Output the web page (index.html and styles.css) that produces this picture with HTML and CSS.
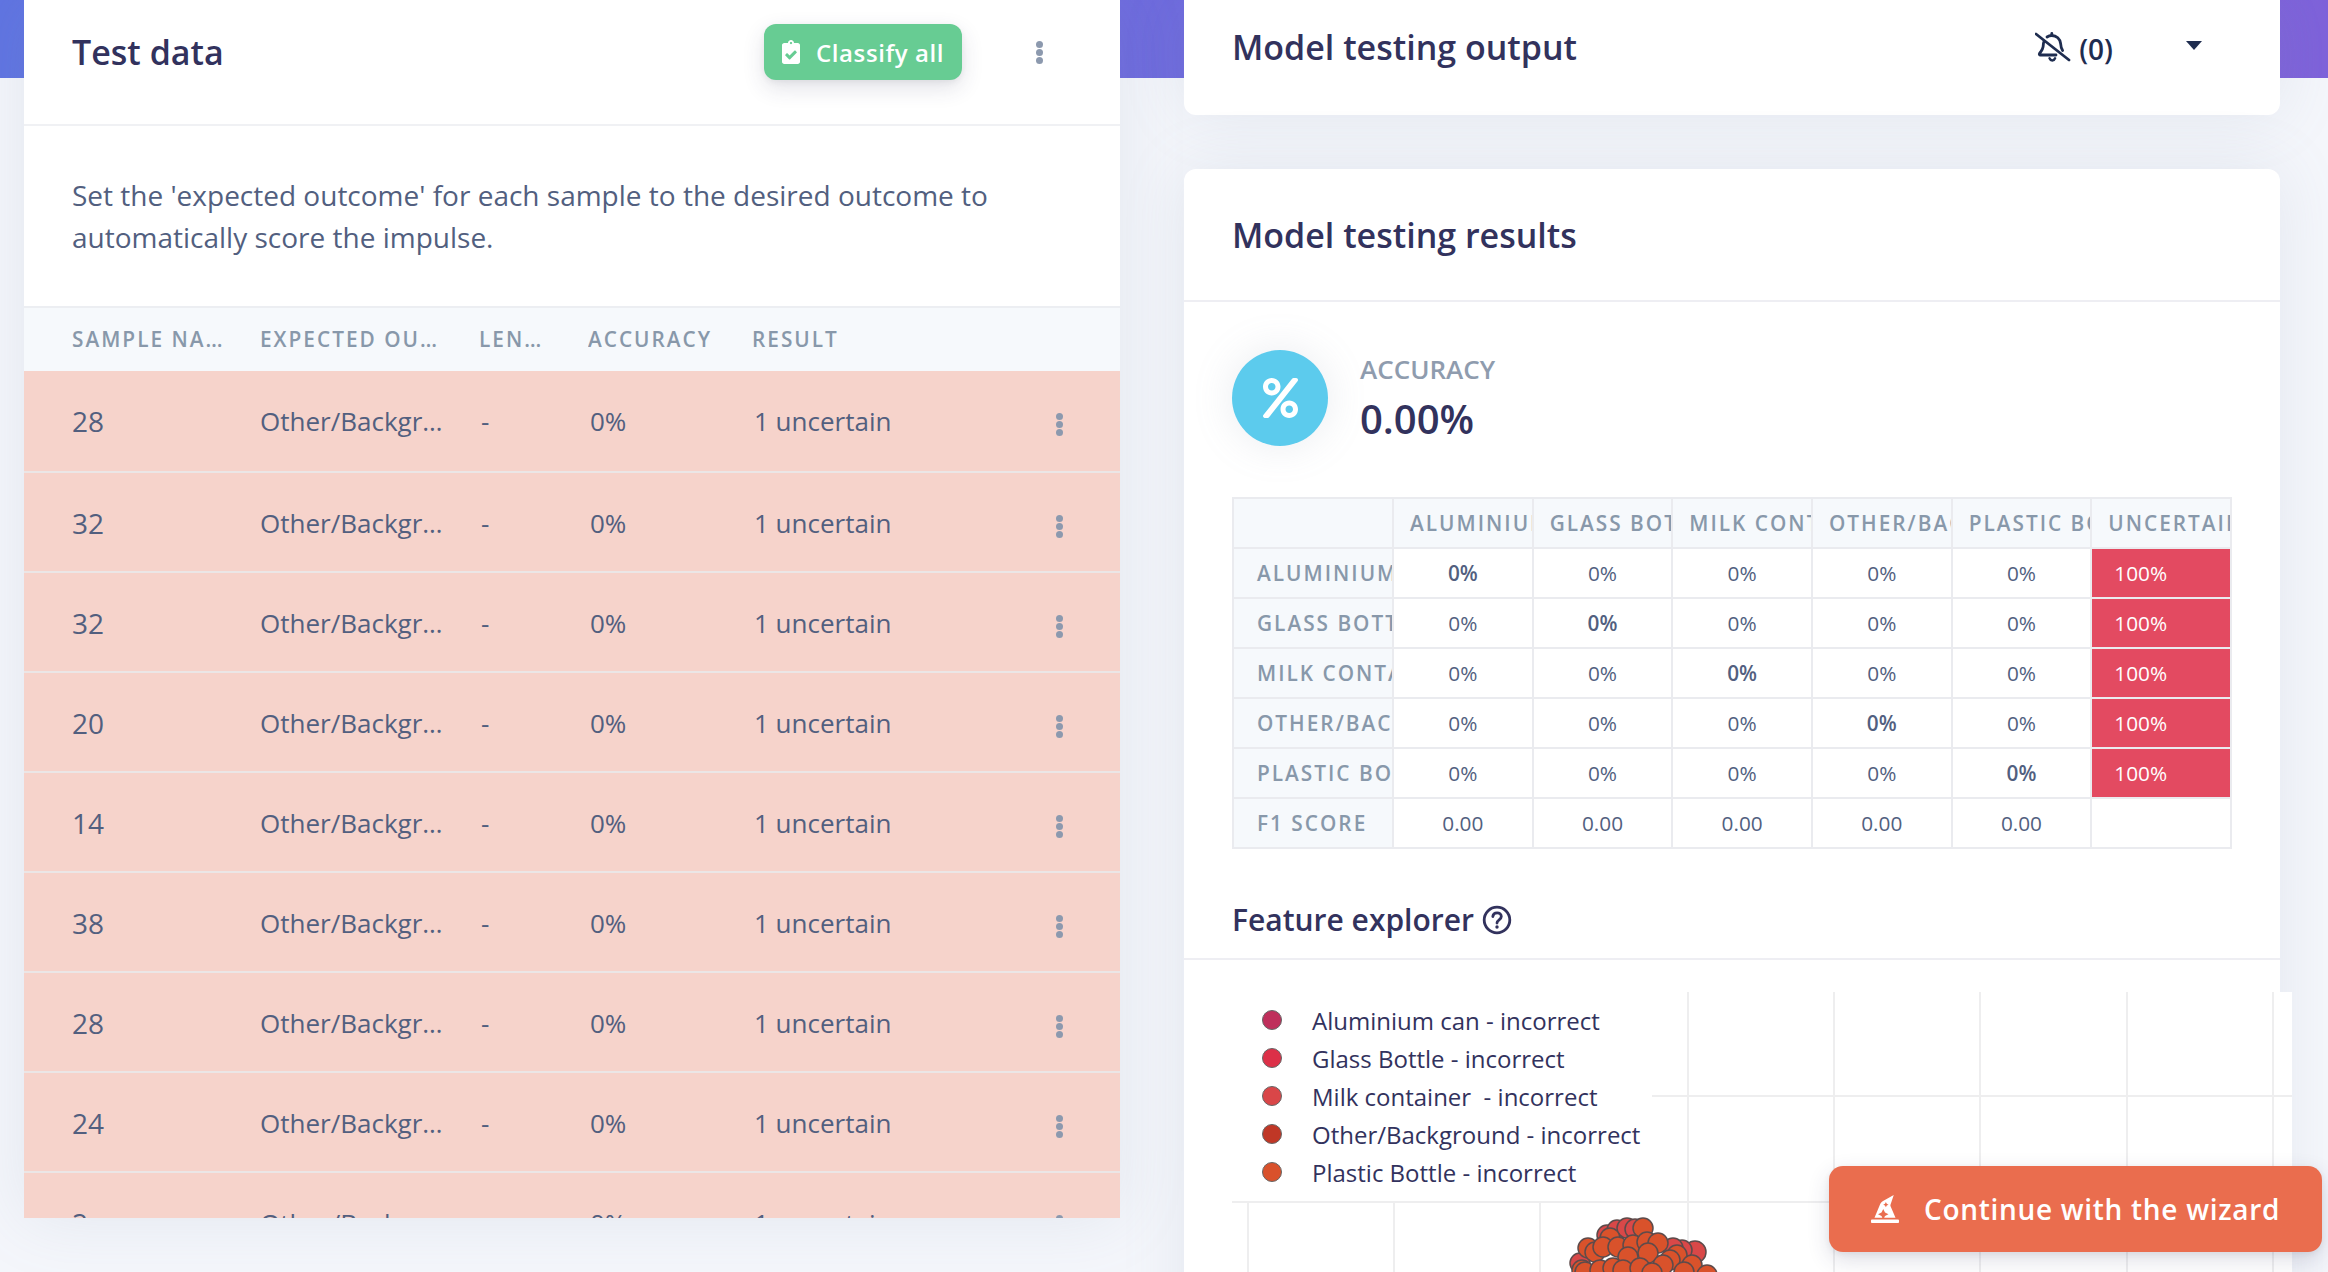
FILE: index.html
```html
<!DOCTYPE html>
<html lang="en">
<head>
<meta charset="utf-8">
<title>Model testing</title>
<link rel="stylesheet" href="styles.css">
</head>
<body>
<div class="band"></div>
<main class="page">
  <section class="card test-card">
    <header class="test-head">
      <h3 class="title">Test data</h3>
      <button class="btn-classify">
        <svg class="ico-clip" viewBox="0 0 384 512"><path fill="#fff" d="M336 64h-80c0-35.3-28.7-64-64-64s-64 28.7-64 64H48C21.5 64 0 85.5 0 112v352c0 26.5 21.5 48 48 48h288c26.5 0 48-21.5 48-48V112c0-26.5-21.5-48-48-48zM192 40c13.3 0 24 10.7 24 24s-10.7 24-24 24-24-10.7-24-24 10.7-24 24-24zm121.2 231.8l-143 141.8c-4.7 4.7-12.3 4.6-17-.1l-82.6-83.3c-4.7-4.7-4.6-12.3.1-17L99.1 285c4.7-4.7 12.3-4.6 17 .1l46 46.4 106-105.2c4.7-4.7 12.3-4.6 17 .1l28.2 28.4c4.7 4.8 4.6 12.3-.1 17z"/></svg>
        Classify all
      </button>
      <span class="dots head-dots"><i></i><i></i><i></i></span>
    </header>
    <p class="desc">Set the 'expected outcome' for each sample to the desired outcome to automatically score the impulse.</p>
    <div class="grid-row th-row">
      <span class="c">Sample name</span><span class="c">Expected outcome</span><span class="c">Length</span><span class="c">Accuracy</span><span class="c">Result</span>
    </div>
    <div class="grid-row tr first"><span class="c">28</span><span class="c">Other/Background</span><span class="c">-</span><span class="c">0%</span><span class="c">1 uncertain</span><span class="dots"><i></i><i></i><i></i></span></div>
    <div class="grid-row tr"><span class="c">32</span><span class="c">Other/Background</span><span class="c">-</span><span class="c">0%</span><span class="c">1 uncertain</span><span class="dots"><i></i><i></i><i></i></span></div>
    <div class="grid-row tr"><span class="c">32</span><span class="c">Other/Background</span><span class="c">-</span><span class="c">0%</span><span class="c">1 uncertain</span><span class="dots"><i></i><i></i><i></i></span></div>
    <div class="grid-row tr"><span class="c">20</span><span class="c">Other/Background</span><span class="c">-</span><span class="c">0%</span><span class="c">1 uncertain</span><span class="dots"><i></i><i></i><i></i></span></div>
    <div class="grid-row tr"><span class="c">14</span><span class="c">Other/Background</span><span class="c">-</span><span class="c">0%</span><span class="c">1 uncertain</span><span class="dots"><i></i><i></i><i></i></span></div>
    <div class="grid-row tr"><span class="c">38</span><span class="c">Other/Background</span><span class="c">-</span><span class="c">0%</span><span class="c">1 uncertain</span><span class="dots"><i></i><i></i><i></i></span></div>
    <div class="grid-row tr"><span class="c">28</span><span class="c">Other/Background</span><span class="c">-</span><span class="c">0%</span><span class="c">1 uncertain</span><span class="dots"><i></i><i></i><i></i></span></div>
    <div class="grid-row tr"><span class="c">24</span><span class="c">Other/Background</span><span class="c">-</span><span class="c">0%</span><span class="c">1 uncertain</span><span class="dots"><i></i><i></i><i></i></span></div>
    <div class="grid-row tr"><span class="c">2</span><span class="c">Other/Background</span><span class="c">-</span><span class="c">0%</span><span class="c">1 uncertain</span><span class="dots"><i></i><i></i><i></i></span></div>
  </section>

  <div class="right">
    <section class="card output-card">
      <h3 class="title">Model testing output</h3>
      <span class="bell">
        <svg class="ico-bell" viewBox="0 0 36 30" fill="none" stroke="#1f2d50" stroke-width="2.8" stroke-linecap="round" stroke-linejoin="round">
          <path d="M1 2l33 26"/>
          <path d="M9 9.500c-.5 1.200-.7 2.400-.7 3.500 0 3.500-1.300 5.500-3.800 8.500-.5.7 0 1.500.8 1.500H21"/>
          <path d="M12 5c1.300-.9 3-1.500 4.800-1.500 4.700 0 8.300 3.500 8.800 8 .2 3 .8 5 2 7"/>
          <path d="M16.800 1.500v2"/>
          <path d="M14.500 26.300c.6 1.500 1.700 2.200 2.800 2.200s2.200-.7 2.800-2.200" stroke-width="2.400"/>
        </svg>
        <span class="bell-count">(0)</span>
      </span>
      <svg class="ico-caret" viewBox="0 0 16 9"><path fill="#1f2d50" d="M0 0h16L8 9z"/></svg>
    </section>

    <section class="card results-card">
      <header class="results-head"><h3 class="title">Model testing results</h3></header>
      <div class="stat">
        <div class="stat-circle">
          <svg class="ico-pct" viewBox="0 0 448 512"><path fill="#fff" d="M112 224c61.900 0 112-50.100 112-112S173.900 0 112 0 0 50.100 0 112s50.100 112 112 112zm0-160c26.500 0 48 21.500 48 48s-21.500 48-48 48-48-21.500-48-48 21.500-48 48-48zm224 224c-61.900 0-112 50.100-112 112s50.100 112 112 112 112-50.100 112-112-50.100-112-112-112zm0 160c-26.500 0-48-21.500-48-48s21.500-48 48-48 48 21.500 48 48-21.500 48-48 48zM392.300.2l31.600.1c19.400.1 30.900 21.800 20 37.800L77.400 501.600a23.950 23.950 0 0 1-20 10.600l-33.400-.1c-19.500 0-30.900-21.900-19.800-37.900L372.300 10.800C377.900 3.900 384.800.2 392.300.2z"/></svg>
        </div>
        <div class="stat-text">
          <div class="stat-label">ACCURACY</div>
          <div class="stat-value">0.00%</div>
        </div>
      </div>

      <table class="cm">
        <colgroup><col class="cm-first"><col><col><col><col><col><col></colgroup>
        <thead><tr><th></th><th>Aluminium can</th><th>Glass Bottle</th><th>Milk container</th><th>Other/Background</th><th>Plastic Bottle</th><th>Uncertain</th></tr></thead>
        <tbody>
          <tr><th>Aluminium can</th><td class="b">0%</td><td>0%</td><td>0%</td><td>0%</td><td>0%</td><td class="bad">100%</td></tr>
          <tr><th>Glass Bottle</th><td>0%</td><td class="b">0%</td><td>0%</td><td>0%</td><td>0%</td><td class="bad">100%</td></tr>
          <tr><th>Milk container</th><td>0%</td><td>0%</td><td class="b">0%</td><td>0%</td><td>0%</td><td class="bad">100%</td></tr>
          <tr><th>Other/Background</th><td>0%</td><td>0%</td><td>0%</td><td class="b">0%</td><td>0%</td><td class="bad">100%</td></tr>
          <tr><th>Plastic Bottle</th><td>0%</td><td>0%</td><td>0%</td><td>0%</td><td class="b">0%</td><td class="bad">100%</td></tr>
          <tr><th>F1 score</th><td>0.00</td><td>0.00</td><td>0.00</td><td>0.00</td><td>0.00</td><td></td></tr>
        </tbody>
      </table>

      <header class="fe-head">
        <h4 class="fe-title">Feature explorer</h4>
        <svg class="ico-q" viewBox="0 0 30 30" fill="none" stroke="#32325d" stroke-width="2.800"><circle cx="15" cy="15" r="12.800"/><path d="M10.800 11.500c.3-2.300 2-3.600 4.300-3.600 2.400 0 4.200 1.500 4.200 3.600 0 3.300-4.300 3.300-4.300 6.500" stroke-linecap="round"/><circle cx="15" cy="22" r="1.700" fill="#32325d" stroke="none"/></svg>
      </header>

      <div class="chart">
        <svg class="chart-svg" width="1060" height="280" viewBox="0 0 1060 280">
          <g stroke="#eeeeef" stroke-width="2" fill="none">
            <path d="M456 0V280M602 0V280M748 0V280M895 0V280M1041 0V280"/>
            <path d="M16 210V280M162 210V280M308 210V280"/>
            <path d="M420 104H1060M0 210H1060"/>
          </g>
          <g stroke="#5d4b4b" stroke-width="1.500" transform="translate(0 0)">
            <g fill="#d94848">
              <circle cx="375" cy="243" r="10"/><circle cx="385" cy="238" r="10"/><circle cx="395" cy="236" r="10"/><circle cx="403" cy="237" r="10"/><circle cx="463" cy="260" r="11"/><circle cx="450" cy="258" r="10"/><circle cx="441" cy="256" r="10"/><circle cx="348" cy="271" r="10"/>
            </g>
            <g fill="#d9522b">
              <circle cx="411" cy="236" r="10"/><circle cx="378" cy="246" r="10"/><circle cx="356" cy="256" r="10"/><circle cx="363" cy="260" r="10"/><circle cx="371" cy="255" r="10"/><circle cx="386" cy="255" r="10"/><circle cx="401" cy="253" r="10"/><circle cx="415" cy="250" r="10"/><circle cx="426" cy="251" r="10"/><circle cx="396" cy="265" r="10"/><circle cx="416" cy="261" r="10"/><circle cx="445" cy="263" r="10"/><circle cx="438" cy="268" r="10"/><circle cx="431" cy="273" r="10"/><circle cx="460" cy="273" r="10"/><circle cx="452" cy="280" r="10"/><circle cx="475" cy="283" r="10"/><circle cx="350" cy="278" r="10"/><circle cx="353" cy="280" r="10"/><circle cx="368" cy="278" r="10"/><circle cx="381" cy="276" r="10"/><circle cx="391" cy="278" r="10"/><circle cx="408" cy="276" r="10"/><circle cx="420" cy="281" r="10"/>
            </g>
          </g>
        </svg>
        <ul class="legend">
          <li class="lg"><i class="lg-dot l1"></i>Aluminium can - incorrect</li>
          <li class="lg"><i class="lg-dot l2"></i>Glass Bottle - incorrect</li>
          <li class="lg"><i class="lg-dot l3"></i>Milk container&nbsp; - incorrect</li>
          <li class="lg"><i class="lg-dot l4"></i>Other/Background - incorrect</li>
          <li class="lg"><i class="lg-dot l5"></i>Plastic Bottle - incorrect</li>
        </ul>
      </div>
    </section>
  </div>
</main>
<button class="wizard">
  <svg class="ico-hat" viewBox="0 0 512 512"><path fill="#fff" d="M496 448H16c-8.840 0-16 7.160-16 16v32c0 8.840 7.160 16 16 16h480c8.840 0 16-7.160 16-16v-32c0-8.840-7.160-16-16-16zm-304-64l-64-32 64-32 32-64 32 64 64 32-64 32-16 32h208l-90.310-210.720c-4.990-11.640-4.410-24.770 1.580-35.940L416 0 228.420 107.250c-31.280 17.870-55.680 45.700-69.470 79.010L64 416h144l-16-32zm64-224l16-32 16 32 32 16-32 16-16 32-16-32-32-16 32-16z"/></svg>
  Continue with the wizard
</button>
</body>
</html>
```
FILE: styles.css
```css
* { box-sizing: border-box; }
html, body { margin: 0; height: 1272px; overflow: hidden; }
body { background: #f4f6fb; font-family: "Open Sans", sans-serif; color: #525f7f; position: relative; }
.band { position: absolute; left: 0; top: 0; right: 0; height: 78px; background: linear-gradient(90deg, #5f74e2 0%, #7e62da 100%); }
.page { position: relative; display: flex; gap: 64px; padding-left: 24px; }
.card { background: #fff; box-shadow: 0 0 64px rgba(130,140,160,.14); }
.title { margin: 0; font-size: 34px; font-weight: 600; line-height: 44px; color: #32325d; }

.test-card { width: 1096px; height: 1218px; overflow: hidden; flex: none; }
.test-head { height: 126px; display: flex; align-items: center; padding: 0 48px 20px; border-bottom: 2px solid #f0f1f4; }
.btn-classify { margin-left: auto; width: 198px; height: 56px; background: #67cc93; border: 0; border-radius: 12px; color: #fff; font: 600 24px "Open Sans", sans-serif; letter-spacing: .6px; display: flex; align-items: center; gap: 16px; padding: 0 0 0 18px; box-shadow: 0 8px 22px rgba(50,50,93,.14), 0 2px 6px rgba(0,0,0,.06); white-space: nowrap; }
.ico-clip { width: 18px; height: 24px; flex: none; }
.dots { display: flex; flex-direction: column; gap: 1px; align-items: center; }
.dots i { display: block; width: 7px; height: 7px; border-radius: 50%; background: #8c99ae; }
.head-dots { margin-left: 74px; margin-right: 29px; }
.desc { margin: 0; padding: 48px 48px 48px; font-size: 28px; line-height: 42px; color: #525f7f; border-bottom: 2px solid #eceef2; height: 182px; }
.grid-row { display: grid; grid-template-columns: 188px 219px 109px 164px 1fr; padding-left: 48px; align-items: center; }
.c { overflow: hidden; white-space: nowrap; text-overflow: ellipsis; }
.th-row { height: 63px; padding-bottom: 2px; background: #f6f9fc; color: #8898aa; font-size: 20.8px; font-weight: 600; letter-spacing: 2px; text-transform: uppercase; }
.th-row .c:nth-child(1) { padding-right: 36px; }
.th-row .c:nth-child(2) { padding-right: 33px; }
.th-row .c:nth-child(3) { padding-right: 46px; }
.tr { height: 100px; padding-top: 1px; background: #f6d3cb; border-bottom: 2px solid #ebe6e6; font-size: 26px; color: #525f7f; position: relative; }
.tr.first { height: 102px; padding-top: 0; }
.tr .c:nth-child(1) { font-size: 28px; }
.tr .c:nth-child(2) { padding-right: 36px; }
.tr .c:nth-child(3) { padding-left: 2px; }
.tr .c:nth-child(4) { padding-left: 2px; }
.tr .c:nth-child(5) { padding-left: 2px; }
.tr .dots { position: absolute; left: 1032px; top: 42px; }

.right { width: 1096px; flex: none; }
.output-card { height: 115px; padding: 0 48px 21px; display: flex; align-items: center; border-radius: 0 0 12px 12px; }
.bell { margin-left: auto; display: flex; align-items: center; gap: 8px; }
.ico-bell { width: 36px; height: 30px; }
.bell-count { font-size: 28px; font-weight: 600; color: #1f2d50; position: relative; top: 2px; }
.ico-caret { width: 16px; height: 9px; margin-left: 73px; margin-right: 30px; margin-top: -4px; }

.results-card { margin-top: 54px; border-radius: 12px 12px 0 0; height: 1400px; }
.results-head { height: 133px; padding: 0 48px; display: flex; align-items: center; border-bottom: 2px solid #eeeef3; }
.stat { display: flex; padding: 48px 48px 0; gap: 32px; height: 195px; }
.stat-circle { width: 96px; height: 96px; border-radius: 50%; background: #5ccbed; display: flex; align-items: center; justify-content: center; box-shadow: 0 0 40px rgba(136,152,170,.18); }
.ico-pct { width: 35px; height: 40px; }
.stat-text { padding-top: 2px; }
.stat-label { font-size: 26px; font-weight: 600; line-height: 34px; color: #8f9cae; }
.stat-value { font-size: 40px; font-weight: 600; line-height: 56px; margin-top: 5px; color: #32325d; }

.cm { margin-left: 48px; width: 1000px; table-layout: fixed; border-collapse: collapse; font-size: 20.8px; }
.cm-first { width: 160px; }
.cm th, .cm td { border: 2px solid #eaebef; height: 50px; padding: 0; overflow: hidden; white-space: nowrap; }
.cm th { background: #f6f9fc; color: #8898aa; font-weight: 600; letter-spacing: 2px; text-transform: uppercase; text-align: left; padding-left: 16px; }
.cm tbody th { padding-left: 23px; }
.cm td { text-align: center; color: #525f7f; }
.cm td.b { font-weight: 600; }
.cm td.bad { background: #e34a61; color: #fff; text-align: left; padding-left: 22px; }

.fe-head { margin-top: 50px; height: 61px; padding: 0 48px 18px; display: flex; align-items: center; gap: 8px; border-bottom: 2px solid #eeeef3; }
.fe-title { margin: 0; font-size: 30px; font-weight: 600; line-height: 40px; color: #32325d; }
.ico-q { width: 30px; height: 30px; }

.chart { position: relative; margin: 32px 0 0 48px; width: 1060px; height: 280px; background: #fff; }
.chart-svg { display: block; }
.legend { position: absolute; left: 0; top: 0; width: 420px; height: 209px; margin: 0; padding: 9px 0 0 30px; list-style: none; background: #fff; }
.lg { display: flex; align-items: center; height: 38px; font-size: 24px; color: #32325d; white-space: nowrap; }
.lg-dot { width: 20px; height: 20px; margin-right: 30px; border-radius: 50%; border: 1px solid #666; flex: none; }
.l1 { background: #bf2f5b; }
.l2 { background: #dc3048; }
.l3 { background: #d94648; }
.l4 { background: #c03726; }
.l5 { background: #d9512b; }

.wizard { position: absolute; left: 1829px; top: 1166px; width: 493px; height: 86px; background: #ea6d4e; border: 0; border-radius: 14px; color: #fff; font: 600 28px "Open Sans", sans-serif; letter-spacing: .7px; display: flex; align-items: center; gap: 25px; padding: 0 0 0 42px; box-shadow: 0 8px 22px rgba(50,50,93,.16), 0 2px 6px rgba(0,0,0,.06); white-space: nowrap; }
.ico-hat { width: 28px; height: 28px; flex: none; }
```
